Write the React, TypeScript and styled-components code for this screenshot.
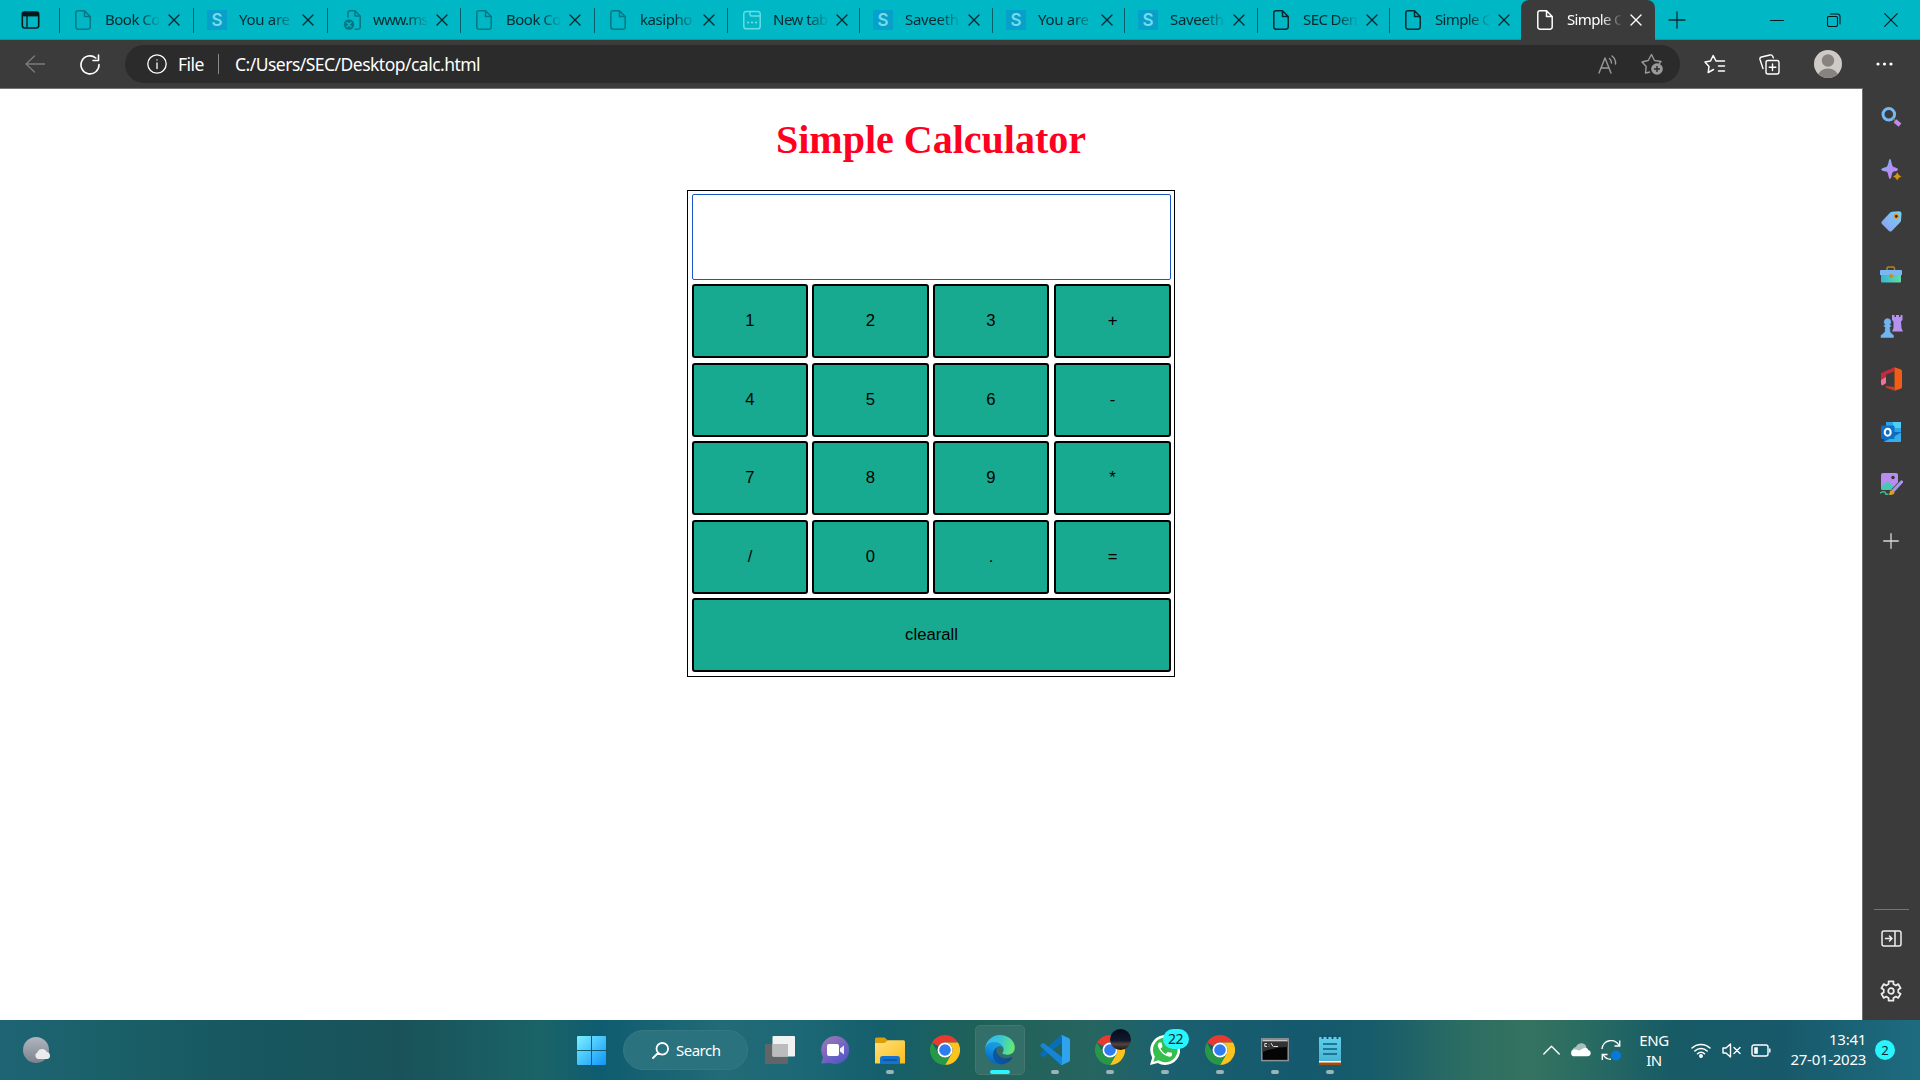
import React from "react";
import styled, { createGlobalStyle } from "styled-components";

const UI = `"Noto Sans", "Open Sans", sans-serif`;

const GlobalStyle = createGlobalStyle`
  *, *::before, *::after { box-sizing: border-box; }
  body { margin: 0; background: #fff; overflow: hidden; }
  svg { display: block; flex: none; }
`;

const Desktop = styled.div`
  width: 1920px;
  height: 1080px;
  display: flex;
  flex-direction: column;
  font-family: ${UI};
  overflow: hidden;
`;

/* ---------- tab strip ---------- */
const TabStrip = styled.div`
  height: 40px;
  flex: none;
  display: flex;
  background: #00b7c6;
  box-shadow: inset 0 -2px 1px -1px #079aa8;
`;
const TabActions = styled.div`
  width: 59px;
  padding-left: 1px;
  display: flex;
  align-items: center;
  justify-content: center;
`;
const Tab = styled.div<{ $w: number; $active?: boolean }>`
  position: relative;
  width: ${(p) => p.$w}px;
  height: 40px;
  flex: none;
  display: flex;
  align-items: center;
  padding-left: ${(p) => (p.$active ? 16 : 15)}px;
  border-left: ${(p) => (p.$active ? 0 : 1)}px solid transparent;
  color: ${(p) => (p.$active ? "#fff" : "#052a2e")};
  background: ${(p) => (p.$active ? "#3b3b3b" : "transparent")};
  border-radius: ${(p) => (p.$active ? "8px 8px 0 0" : "0")};
  &::before {
    content: "";
    display: ${(p) => (p.$active ? "none" : "block")};
    position: absolute;
    left: -1px;
    top: 8px;
    width: 1px;
    height: 25px;
    background: #06606a;
  }
`;
const TabIcon = styled.span`
  width: 20px;
  height: 20px;
  display: flex;
  align-items: center;
`;
const TabTitle = styled.span<{ $track: number }>`
  width: 54px;
  margin-left: 10px;
  padding-bottom: 2px;
  overflow: hidden;
  white-space: nowrap;
  font-size: 15px;
  line-height: 22px;
  letter-spacing: ${(p) => p.$track}px;
  -webkit-mask-image: linear-gradient(90deg, #000 62%, transparent 104%);
  mask-image: linear-gradient(90deg, #000 62%, transparent 104%);
`;
const TabClose = styled.span`
  margin-left: 9px;
`;
const SiteBadge = styled.span`
  width: 20px;
  height: 20px;
  margin-left: -2px;
  background: #06a0cb;
  color: #74dbe8;
  font: 600 17px/20px Inter, sans-serif;
  text-align: center;
`;
const NewTab = styled.div`
  width: 44px;
  display: flex;
  align-items: center;
  justify-content: center;
`;
const WindowButtons = styled.div`
  margin-left: auto;
  margin-right: 1px;
  display: flex;
`;
const WindowButton = styled.div`
  width: 57px;
  height: 39px;
  display: flex;
  align-items: center;
  justify-content: center;
`;

/* ---------- toolbar ---------- */
const Toolbar = styled.div`
  height: 48px;
  flex: none;
  display: flex;
  align-items: center;
  background: #3b3b3b;
  color: #fff;
`;
const NavSlot = styled.div<{ $w: number }>`
  width: ${(p) => p.$w}px;
  display: flex;
  justify-content: center;
`;
const AddressBar = styled.div`
  width: 1555px;
  height: 38px;
  display: flex;
  align-items: center;
  padding: 0 17px 0 22px;
  border-radius: 19px;
  background: #2b2b2b;
  font-size: 17.5px;
  line-height: 24px;
  white-space: pre;
`;
const Scheme = styled.span`
  margin-left: 11px;
  padding-bottom: 1px;
  width: 40px;
  letter-spacing: -0.5px;
`;
const AddressRule = styled.span`
  width: 1px;
  height: 20px;
  background: #8a8a8a;
`;
const Url = styled.span`
  margin-left: 16px;
  padding-bottom: 1px;
  letter-spacing: -0.52px;
`;
const AddressTools = styled.div`
  margin-left: auto;
  display: flex;
  align-items: center;
  gap: 24px;
`;
const ToolbarEnd = styled.div`
  flex: 1;
  display: flex;
  align-items: center;
  padding-left: 7px;
`;

/* ---------- page and sidebar ---------- */
const Middle = styled.div`
  flex: 1;
  display: flex;
  min-height: 0;
`;
const Page = styled.main`
  width: 1862px;
  border-top: 1px solid #757575;
  background: #fff;
  display: flex;
  flex-direction: column;
  align-items: center;
`;
const Heading = styled.h1`
  margin: 27px 0 27px;
  font: 700 40px/47px "Liberation Serif", "Times New Roman", serif;
  color: #ff0021;
`;
const Calculator = styled.section`
  width: 488px;
  height: 487px;
  border: 1px solid #000;
  padding: 3px 3px 3px 4px;
  display: grid;
  grid-template-columns: 120px 121px 121px 117px;
  grid-template-rows: 90px 79px 78px 79px 78px 74px;
  justify-items: start;
  align-items: start;
`;
const Display = styled.input`
  grid-column: 1 / -1;
  width: 479px;
  height: 86px;
  margin: 0;
  border: 1px solid #1a56c4;
  border-radius: 2px;
  outline: none;
  background: #fff;
`;
const Key = styled.button<{ $w: number; $span?: boolean }>`
  grid-column: ${(p) => (p.$span ? "1 / -1" : "auto")};
  width: ${(p) => p.$w}px;
  height: 74px;
  margin: 0;
  padding: 0;
  border: 2px solid #000;
  border-radius: 3px;
  background: #18aa90;
  color: #000;
  font: 16.667px "Liberation Sans", Arial, sans-serif;
`;
const Sidebar = styled.aside`
  width: 58px;
  display: flex;
  flex-direction: column;
  align-items: center;
  padding: 3px 1px 3px 0;
  background: #3b3b3b;
  border-left: 1px solid #6e6e6e;
`;
const SideSlot = styled.div<{ $h: number }>`
  height: ${(p) => p.$h}px;
  display: flex;
  align-items: center;
`;
const SideRule = styled.div`
  width: 35px;
  height: 1px;
  margin: auto 0 3px;
  background: #757575;
`;

/* ---------- taskbar ---------- */
const Taskbar = styled.footer`
  height: 60px;
  flex: none;
  display: flex;
  align-items: center;
  color: #fff;
  background: linear-gradient(
    90deg,
    #1f6474 0, #1a6068 110px, #175760 240px, #195359 400px, #1a6367 540px,
    #0f5c70 600px, #226b77 720px, #1d6876 800px, #155f6c 880px, #1f6159 975px,
    #26655f 1090px, #1a6070 1170px, #14596d 1300px, #165c6b 1370px, #2d6e62 1470px,
    #357360 1530px, #286b62 1590px, #175b66 1670px, #17596a 1780px, #1e6b80 1920px
  );
`;
const Weather = styled.div`
  width: 564px;
  padding-left: 23px;
`;
const AppSlot = styled.div`
  position: relative;
  width: 55px;
  height: 60px;
  display: flex;
  align-items: center;
  justify-content: center;
`;
const ActivePlate = styled.div`
  width: 50px;
  height: 50px;
  display: flex;
  align-items: center;
  justify-content: center;
  border-radius: 5px;
  border: 1px solid #45766f;
  background: #336e68;
`;
const Indicator = styled.span<{ $active?: boolean }>`
  position: absolute;
  bottom: 6px;
  left: ${(p) => (p.$active ? 17.5 : 23.5)}px;
  width: ${(p) => (p.$active ? 20 : 8)}px;
  height: 4px;
  border-radius: 2px;
  background: ${(p) => (p.$active ? "#29f5fd" : "#9bb4b8")};
`;
const SearchPill = styled.div`
  width: 125px;
  height: 40px;
  margin: 0 4.5px 0 4px;
  padding-left: 28px;
  display: flex;
  align-items: center;
  gap: 7px;
  border-radius: 20px;
  border: 1px solid #347884;
  background: #2b727f;
  font-size: 15px;
  letter-spacing: -0.5px;
`;
const CountBadge = styled.span`
  position: absolute;
  left: 25px;
  top: 9px;
  width: 26px;
  height: 20px;
  border-radius: 10px;
  background: #29f5fd;
  color: #062c30;
  font-size: 14px;
  line-height: 20px;
  letter-spacing: -0.4px;
  text-align: center;
`;
const ProfileBadge = styled.span`
  position: absolute;
  left: 27px;
  top: 9px;
  width: 21px;
  height: 21px;
  border-radius: 50%;
  background: linear-gradient(180deg, #070b18 0%, #101a30 55%, #54443c 72%, #161418 100%);
`;
const Tray = styled.div`
  margin-left: auto;
  padding-right: 25px;
  display: flex;
  align-items: center;
`;
const TraySlot = styled.div`
  width: 30px;
  display: flex;
  justify-content: center;
`;
const Language = styled.div`
  width: 56px;
  margin-right: 4px;
  padding-bottom: 1px;
  text-align: center;
  font-size: 15px;
  line-height: 20px;
  letter-spacing: -0.4px;
`;
const Clock = styled.div`
  width: 90px;
  padding-bottom: 2px;
  text-align: right;
  font-size: 15px;
  line-height: 20px;
  letter-spacing: -0.28px;
`;
const Notices = styled.div`
  width: 20px;
  height: 20px;
  margin-left: 9px;
  border-radius: 50%;
  background: #29f5fd;
  color: #062c30;
  font-size: 13px;
  line-height: 20px;
  text-align: center;
`;

/* ---------- drawings ---------- */
type StrokeProps = {
  w: number;
  h: number;
  d: string;
  color?: string;
  sw?: number;
  children?: React.ReactNode;
};
const Line = ({ w, h, d, color = "currentColor", sw = 1.5, children }: StrokeProps) => (
  <svg width={w} height={h} viewBox={`0 0 ${w} ${h}`} fill="none" stroke={color} strokeWidth={sw} strokeLinecap="round" strokeLinejoin="round">
    <path d={d} />
    {children}
  </svg>
);

const FileIcon = ({ color }: { color: string }) => (
  <Line w={16} h={20} color={color} d="M3 .8H9.5L15.2 6.5V17A2.2 2.2 0 0 1 13 19.2H3A2.2 2.2 0 0 1 .8 17V3A2.2 2.2 0 0 1 3 .8ZM9.5 1V6.5H15" />
);
const BlockedFileIcon = () => (
  <Line w={18} h={20} color="#057783" d="M5 7V3A2.2 2.2 0 0 1 7 .8H12L17.2 6V17A2.2 2.2 0 0 1 15 19.2H12M12 1V6H17">
    <circle cx="6" cy="14.5" r="5.2" fill="#057783" stroke="none" />
    <path d="M4 12.5l4 4M8 12.5l-4 4" stroke="#00b7c6" strokeWidth="1.4" />
  </Line>
);
const NewTabPageIcon = () => (
  <Line w={18} h={20} color="#68dce2" d="M3 1.5H15A2.2 2.2 0 0 1 17.2 3.8V16.5A2.2 2.2 0 0 1 15 18.8H3A2.2 2.2 0 0 1 .8 16.5V3.8A2.2 2.2 0 0 1 3 1.5ZM7 1.5V4.5Q7 6 8.5 6H17">
    <path d="M5 12.5h.1M9 12.5h.1M13 12.5h.1" strokeWidth="2.2" />
  </Line>
);

const gearPath = (() => {
  const points: string[] = [];
  for (let i = 0; i < 6; i++) {
    const mid = i * 60 - 90;
    [[-19, 7.4], [-14, 10], [14, 10], [19, 7.4]].forEach(([offset, r]) => {
      const a = ((mid + offset) * Math.PI) / 180;
      points.push(`${(11 + r * Math.cos(a)).toFixed(2)} ${(11 + r * Math.sin(a)).toFixed(2)}`);
    });
  }
  return `M${points.join("L")}Z`;
})();

const Chrome = () => (
  <svg width="30" height="30" viewBox="0 0 48 48">
    <path fill="#e63b2e" d="M24 0A24 24 0 0 1 44.8 12H24A12 12 0 0 0 13.6 18L3.2 12A24 24 0 0 1 24 0Z" />
    <path fill="#fcc31e" d="M44.8 12A24 24 0 0 1 24 48L34.4 30A12 12 0 0 0 24 12Z" />
    <path fill="#279847" d="M3.2 12L13.6 30A12 12 0 0 0 34.4 30L24 48A24 24 0 0 1 3.2 12Z" />
    <circle cx="24" cy="24" r="12" fill="#fff" />
    <circle cx="24" cy="24" r="9.3" fill="#2f7cf0" />
  </svg>
);
const Edge = () => (
  <svg width="30" height="30" viewBox="0 0 257 259">
    <defs>
      <linearGradient id="edgeA" x1="60" y1="180" x2="240" y2="180" gradientUnits="userSpaceOnUse">
        <stop stopColor="#0c59a4" /><stop offset="1" stopColor="#114a8b" />
      </linearGradient>
      <linearGradient id="edgeB" x1="130" y1="60" x2="50" y2="230" gradientUnits="userSpaceOnUse">
        <stop stopColor="#1b9de2" /><stop offset=".4" stopColor="#1595df" /><stop offset="1" stopColor="#0669bd" />
      </linearGradient>
      <linearGradient id="edgeC" x1="10" y1="50" x2="250" y2="120" gradientUnits="userSpaceOnUse">
        <stop stopColor="#35b9ee" /><stop offset=".45" stopColor="#36c6d8" /><stop offset="1" stopColor="#66eb6e" />
      </linearGradient>
    </defs>
    <path fill="url(#edgeA)" d="M231 190.5a94 94 0 0 1-10.5 4.7 102 102 0 0 1-36 6.5c-47.3 0-88.5-32.6-88.5-74.3a31.5 31.5 0 0 1 16.4-27.3c-42.8 1.8-53.8 46.4-53.8 72.5 0 74 68.1 81.4 82.8 81.4 7.9 0 19.8-2.3 27-4.6l1.3-.4a128.3 128.3 0 0 0 66.6-52.8 4 4 0 0 0-5.3-5.7z" />
    <path fill="url(#edgeB)" d="M105.7 242a79.2 79.2 0 0 1-22.7-21.4A80.7 80.7 0 0 1 112.5 99.7c3.1-1.5 8.5-4.1 15.6-4a32.4 32.4 0 0 1 25.7 13 31.9 31.9 0 0 1 6.3 18.7c0-.2 24.5-79.6-80-79.6-43.9 0-80 41.7-80 78.2a130.2 130.2 0 0 0 12.1 56 128 128 0 0 0 156.4 67.1 75.5 75.5 0 0 1-62.8-7z" />
    <path fill="url(#edgeC)" d="M152.3 148.9c-.8 1-3.3 2.5-3.3 5.7 0 2.7 1.7 5.2 4.8 7.3 14.4 10 41.5 8.7 41.6 8.7a59.6 59.6 0 0 0 30.3-8.3 61.4 61.4 0 0 0 30.4-52.9c.3-22.3-8-37.1-11.3-43.7C223.5 24.3 177.7.4 128 .4A128 128 0 0 0 0 126.8c.5-36.5 36.8-66 80-66 3.5 0 23.5.3 42 10 16.3 8.6 24.9 19 30.9 29.3 6.2 10.7 7.3 24.2 7.3 29.5s-2.8 13.3-7.9 19.3z" />
  </svg>
);
const VsCode = () => (
  <svg width="30" height="30" viewBox="0 0 30 30">
    <path fill="#0a6db8" d="M22 0V8L4 21.8Q3 22.4 2 21.6L.5 20.2Q-.3 19.3.6 18.5L20.5.6Q21.2 0 22 0Z" />
    <path fill="#1586d4" d="M22 30V22L4 8.2Q3 7.6 2 8.4L.5 9.8Q-.3 10.7.6 11.5L20.5 29.4Q21.2 30 22 30Z" />
    <path fill="#2fa3ee" d="M22 0L29 3.3Q30 3.8 30 5V25Q30 26.2 29 26.7L22 30Q21 30 20.7 29.3Q22 29.7 22 28V2Q22 .3 20.7.7Q21 0 22 0Z" />
  </svg>
);
const WhatsApp = () => (
  <svg width="30" height="30" viewBox="0 0 30 30">
    <path fill="#fff" d="M0 30L2.2 22.4A15 15 0 1 1 7.8 28Z" />
    <path fill="#35bd4d" d="M3.4 26.7L4.9 21.6A12.3 12.3 0 1 1 8.6 25.3Z" />
    <path fill="#fff" transform="translate(5.2 5.2) scale(.8)" d="M6.62,10.79C8.06,13.62 10.38,15.94 13.21,17.38L15.41,15.18C15.69,14.9 16.08,14.82 16.43,14.93C17.55,15.3 18.75,15.5 20,15.5A1,1 0 0,1 21,16.5V18.5C20.5,20.5 18.5,21 16.5,20.5C10,18.5 5.5,14 3.5,8C3,6 3.5,3.5 5.5,3H7.5A1,1 0 0,1 8.2,4L9.07,7.57C9.18,7.92 9.1,8.31 8.82,8.59Z" />
  </svg>
);
const Explorer = () => (
  <svg width="30" height="27" viewBox="0 0 30 27">
    <defs>
      <linearGradient id="fold" x1="0" y1="0" x2="1" y2="1">
        <stop stopColor="#ffe17a" /><stop offset="1" stopColor="#fbbd1d" />
      </linearGradient>
    </defs>
    <path fill="#dd9d08" d="M0 2Q0 .5 1.5.5H9.5L13 3.5V8H0Z" />
    <path fill="url(#fold)" d="M0 6H9.5L13 3.2H28.5Q30 3.2 30 4.7V26Q30 26.5 29.5 26.5H.5Q0 26.5 0 26Z" />
    <path fill="#1473ce" d="M5 27V21.5Q5 19 7.5 19H22.5Q25 19 25 21.5V27Z" />
    <path stroke="#0c4c94" strokeWidth="1.4" d="M8 23H22" />
  </svg>
);
const TaskView = () => (
  <svg width="30" height="28" viewBox="0 0 30 28">
    <rect x="0" y="8" width="23" height="20" rx="1" fill="#626567" />
    <rect x="7.5" y="0" width="22.5" height="20.5" rx="1" fill="#f1f2f2" />
    <rect x="7.5" y="8" width="15.5" height="12.5" fill="#babcbd" />
  </svg>
);
const Chat = () => (
  <svg width="28" height="28" viewBox="0 0 28 28">
    <defs>
      <linearGradient id="chat" x1="0" y1="0" x2=".7" y2="1">
        <stop stopColor="#a27bb4" /><stop offset="1" stopColor="#5157c8" />
      </linearGradient>
    </defs>
    <path fill="url(#chat)" d="M14 0A14 14 0 1 1 9 27Q5 27 .6 27.5Q0 27.4.4 26.6L2 21A14 14 0 0 1 14 0Z" />
    <rect x="6" y="8" width="12" height="12" rx="2" fill="#fff" />
    <path fill="#f1eefc" d="M19 12.5L23 9.5V18.5L19 15.5Z" />
  </svg>
);
const Terminal = () => (
  <svg width="28" height="24" viewBox="0 0 28 24">
    <rect x=".8" y=".8" width="26.4" height="21.8" fill="#050505" stroke="#8d9294" strokeWidth="1.5" />
    <rect x="1.5" y="1.5" width="25" height="2" fill="#c6c9ca" />
    <path d="M1.5 4H26.5V9Q14 9 1.5 14Z" fill="#333" />
    <path d="M6 5.5H3.8V8.5H6M8 6V6.5M8 8V8.5M10 5L12 8.5M12.5 8.5H17" fill="none" stroke="#ddd" strokeWidth="1" />
  </svg>
);
const Notepad = () => (
  <svg width="22" height="30" viewBox="0 0 22 30">
    <defs>
      <linearGradient id="note" x1="0" y1="0" x2="0" y2="1">
        <stop stopColor="#5ed0ea" /><stop offset="1" stopColor="#48b4d4" />
      </linearGradient>
    </defs>
    <path fill="#a34d0c" d="M0 26H22V29Q22 30 21 30H1Q0 30 0 29Z" />
    <path fill="#fff" d="M0 24H22V27.5H0Z" />
    <path fill="url(#note)" d="M1 2H21Q22 2 22 3V26H0V3Q0 2 1 2Z" />
    <path d="M4 9H18M4 14H18M4 19H18" stroke="#0d5f80" strokeWidth="1.5" />
    <path d="M3.5 0V4M8.500 0V4M13.5 0V4M18.5 0V4" stroke="#0d4f69" strokeWidth="1.8" />
  </svg>
);

const SideDefs = () => (
  <svg width="0" height="0">
    <defs>
      <linearGradient id="bp" x1="0" y1="0" x2="1" y2="1">
        <stop stopColor="#63c5f5" /><stop offset=".55" stopColor="#b48df5" /><stop offset="1" stopColor="#c08af2" />
      </linearGradient>
      <linearGradient id="pb" x1="0" y1="1" x2="1" y2="0">
        <stop stopColor="#8f9cf5" /><stop offset="1" stopColor="#74d3f4" />
      </linearGradient>
      <linearGradient id="box" x1="0" y1="0" x2="1" y2="0">
        <stop stopColor="#35b6d6" /><stop offset="1" stopColor="#62dba0" />
      </linearGradient>
    </defs>
  </svg>
);
const sideIcons: React.ReactNode[] = [
  <svg width="21" height="20" viewBox="0 0 21 20">
    <circle cx="7.8" cy="7.3" r="5.8" fill="none" stroke="#74b9f4" strokeWidth="3" />
    <path d="M11.8 11.5L14 13.5" stroke="#a57a38" strokeWidth="1.5" />
    <path d="M14 13.8L19 18.200" stroke="#bd8cf0" strokeWidth="4.2" />
  </svg>,
  <svg width="22" height="22" viewBox="0 0 22 22">
    <path fill="url(#bp)" d="M10 0C11.5 0 11.5 7 13.5 8C19.5 9.500 19.5 11.5 13.5 12.500C11.5 13.5 11.5 20 10 20C8.5 20 8.5 13.5 6.5 12.5C-.5 11.5-.5 9.5 6.5 8C8.5 7 8.5 0 10 0Z" />
    <path fill="#cf9412" stroke="#3b3b3b" strokeWidth=".6" d="M17.3 12.5Q18.4 16.300 22 17.5Q18.4 18.5 17.3 22Q16.1 18.5 12.5 17.5Q16.1 16.3 17.3 12.5Z" />
  </svg>,
  <svg width="21" height="21" viewBox="0 0 21 21">
    <path fill="url(#pb)" d="M11 .8L18 .3Q20.5.3 20.5 3L20 9.5Q20 10.5 19 11.5L10.8 20Q9.3 21 8 20L1 13Q-.2 11.6 1 10.2L9 1.8Q10 .9 11 .8Z" />
    <circle cx="15.3" cy="5.3" r="2" fill="#222" stroke="#e8941c" strokeWidth="1.3" />
  </svg>,
  <svg width="22" height="17" viewBox="0 0 22 17">
    <path d="M7 4V2.5Q7 1 8.5 1H13Q14.5 1 14.5 2.5V4" fill="none" stroke="#b8802a" strokeWidth="1.5" />
    <path fill="url(#box)" d="M1 8H21V15.5Q21 16.5 20 16.5H2Q1 16.5 1 15.5Z" />
    <path fill="#7bb7f3" d="M0 5Q0 4 1 4H21Q22 4 22 5V9H0Z" />
    <circle cx="11" cy="10" r="2.1" fill="#c98e16" />
  </svg>,
  <svg width="23" height="23" viewBox="0 0 23 23">
    <path fill="#b592ee" d="M12 0H14.5V2H16V0H19V2H20.5V0H22.5V5L21 6.5L21.5 13L23 16.5H12L13.5 13L13.5 6.5L12 5Z" />
    <path fill="#70b5f2" stroke="#3b3b3b" strokeWidth=".5" d="M7.5 3A4 4 0 0 1 10 10H11.5V12H10L10.5 17L14 20.5V23H.5V20.5L4.5 17L5 12H3.5V10H5A4 4 0 0 1 7.5 3Z" />
  </svg>,
  <svg width="21" height="24" viewBox="0 0 21 24">
    <path fill="#c62a3c" d="M0 6L13.5.3V4.5L5 7.5V16L1.5 18.5Q0 18 0 16Z" />
    <path fill="#f25c14" d="M13.5.3L20 2.5Q21 3 21 4V20Q21 21 20 21.5L13.5 23.7Z" />
    <path fill="#d13a28" d="M4.5 19L13.5 20V23.7L5 20.5Z" />
    <path fill="#ef729a" d="M0 13L5 10V16L1.5 18.5Q0 18 0 16Z" />
  </svg>,
  <svg width="21" height="20" viewBox="0 0 21 20">
    <rect x="5" y="0" width="15" height="12" fill="#2da4e6" />
    <path fill="#50cdf5" d="M12 0H20V6H12Z" />
    <path fill="#0e6ab8" d="M3 10L20 10V20H3Z" />
    <path fill="#35aee9" d="M3 20L20 10.5V19Q20 20 19 20Z" />
    <rect x="0" y="3.5" width="13.5" height="13.5" rx="1.2" fill="#0d6fc7" />
    <ellipse cx="6.7" cy="10.2" rx="3" ry="3.5" fill="none" stroke="#fff" strokeWidth="2" />
  </svg>,
  <svg width="23" height="24" viewBox="0 -1 23 24">
    <rect x="1" y="0" width="17" height="17" rx="2" fill="#b98df0" />
    <path fill="#46c9b0" d="M1 14L7.5 8.5L16 15.5Q16 17 14 17H3Q1 17 1 15Z" />
    <circle cx="13" cy="4.5" r="1.7" fill="#333" />
    <path d="M21.5 9L13 18" stroke="#3b3b3b" strokeWidth="4.6" />
    <path d="M21.5 9L13 18" stroke="#a995ee" strokeWidth="3.2" strokeLinecap="round" />
    <path fill="#db9c28" d="M10 18Q13 16 14.5 19Q14.5 22.5 9 22Z" />
    <path d="M0 20Q5 17.5 5.5 20Q5 22 8.5 21" fill="none" stroke="#42b98f" strokeWidth="1.5" />
  </svg>,
];

/* ---------- data ---------- */
type TabInfo = { title: string; icon: "file" | "dark" | "site" | "blocked" | "newtab"; w: number; track: number };
const tabs: TabInfo[] = [
  { title: "Book Co", icon: "file", w: 134, track: -0.5 },
  { title: "You are", icon: "site", w: 134, track: -0.3 },
  { title: "www.ms", icon: "blocked", w: 133, track: -0.9 },
  { title: "Book Co", icon: "file", w: 134, track: -0.5 },
  { title: "kasipho", icon: "file", w: 133, track: -0.45 },
  { title: "New tab", icon: "newtab", w: 132, track: -0.5 },
  { title: "Saveeth", icon: "site", w: 133, track: -0.3 },
  { title: "You are", icon: "site", w: 132, track: -0.3 },
  { title: "Saveeth", icon: "site", w: 133, track: -0.3 },
  { title: "SEC Dem", icon: "dark", w: 132, track: -0.6 },
  { title: "Simple C", icon: "dark", w: 132, track: -0.65 },
];
const renderTabIcon = (icon: TabInfo["icon"]) => {
  if (icon === "site") return <SiteBadge>S</SiteBadge>;
  if (icon === "blocked") return <BlockedFileIcon />;
  if (icon === "newtab") return <NewTabPageIcon />;
  return <FileIcon color={icon === "dark" ? "#052a2e" : "#057783"} />;
};
const keys = ["1", "2", "3", "+", "4", "5", "6", "-", "7", "8", "9", "*", "/", "0", ".", "="];
const keyWidths = [116, 117, 116, 117];

export default function App() {
  return (
    <Desktop>
      <GlobalStyle />
      <TabStrip>
        <TabActions>
          <svg width="19" height="18" viewBox="0 0 19 18" fill="none" stroke="#04191c" strokeWidth="1.6">
            <rect x="1.3" y="1" width="16.4" height="16" rx="2.5" />
            <path d="M1.3 3.3H17.7" strokeWidth="4.2" />
            <path d="M6 5V17" strokeWidth="1.3" />
          </svg>
        </TabActions>
        {tabs.map((t, i) => (
          <Tab key={i} $w={t.w}>
            <TabIcon>{renderTabIcon(t.icon)}</TabIcon>
            <TabTitle $track={t.track}>{t.title}</TabTitle>
            <TabClose><Line w={12} h={12} sw={1.4} d="M1 1L11 11M11 1L1 11" /></TabClose>
          </Tab>
        ))}
        <Tab $active $w={134}>
          <TabIcon><FileIcon color="#fff" /></TabIcon>
          <TabTitle $track={-0.65}>Simple C</TabTitle>
          <TabClose><Line w={12} h={12} sw={1.4} d="M1 1L11 11M11 1L1 11" /></TabClose>
        </Tab>
        <NewTab><Line w={18} h={18} sw={1.3} color="#052a2e" d="M9 1V17M1 9H17" /></NewTab>
        <WindowButtons>
          <WindowButton><Line w={14} h={14} sw={1} color="#04191c" d="M.5 7.5H13.5" /></WindowButton>
          <WindowButton>
            <Line w={14} h={14} sw={1.1} color="#04191c" d="M2 3.5H9A1.5 1.5 0 0 1 10.5 5V12A1.5 1.5 0 0 1 9 13.5H2A1.5 1.5 0 0 1 .5 12V5A1.5 1.5 0 0 1 2 3.5ZM3.5 1H10.5A2.5 2.5 0 0 1 13 3.5V11" />
          </WindowButton>
          <WindowButton><Line w={14} h={14} sw={1.1} color="#04191c" d="M.7.7L13.3 13.3M13.3.7L.7 13.3" /></WindowButton>
        </WindowButtons>
      </TabStrip>

      <Toolbar>
        <NavSlot $w={70}><Line w={20} h={18} color="#7c7c7c" sw={1.3} d="M19.5 9H1M9.5 1L1 9L9.5 17" /></NavSlot>
        <NavSlot $w={40}>
          <Line w={20} h={21} sw={1.6} d="M19 10.5A9 9 0 1 1 15.8 4M18.5 1V6.5H13" />
        </NavSlot>
        <NavSlot $w={15} />
        <AddressBar>
          <Line w={20} h={20} sw={1.3} d="M10 .8A9.2 9.2 0 1 1 10 19.2A9.2 9.2 0 1 1 10 .8ZM10 9V14.5M10 5.8V6" />
          <Scheme>File</Scheme>
          <AddressRule />
          <Url>C:/Users/SEC/Desktop/calc.html</Url>
          <AddressTools>
            <Line w={19} h={19} color="#9a9a9a" sw={1.4} d="M1 18L7 3L13 18M3 13H11M11.5 3.5Q13.5 5 13.5 8M14 1Q18 4 17.5 9" />
            <svg width="22" height="22" viewBox="0 0 22 22" fill="none" stroke="#9a9a9a" strokeWidth="1.4" strokeLinejoin="round">
              <path d="M9 19L4.5 20L5.2 13.5L1 9L7.2 7.5L10.5 1.5L13.5 7.5L20 8.5L18 11" />
              <circle cx="16" cy="16" r="5.8" fill="#9a9a9a" stroke="none" />
              <path d="M16 13V19M13 16H19" stroke="#2b2b2b" />
            </svg>
          </AddressTools>
        </AddressBar>
        <ToolbarEnd>
          <NavSlot $w={56}>
            <Line w={22} h={20} sw={1.5} d="M12 7H20.5M14.5 12H20.5M14.5 17H20.5M12 7L9.2 1.5L6.5 7L1 8L5 12.5L4.2 18.5L9.5 15.5" />
          </NavSlot>
          <NavSlot $w={53}>
            <Line w={21} h={21} sw={1.4} d="M9 6.5H18A2 2 0 0 1 20 8.5V18A2 2 0 0 1 18 20H9A2 2 0 0 1 7 18V8.5A2 2 0 0 1 9 6.5ZM13.5 10V16.5M10.2 13.3H16.8M4 14.5L1 5.5Q.5 3.5 2.5 3L11 1Q13 .5 13.8 2.5L14.3 3.8" />
          </NavSlot>
          <NavSlot $w={63}>
            <svg width="28" height="28" viewBox="0 0 28 28">
              <defs><clipPath id="face"><circle cx="14" cy="14" r="14" /></clipPath></defs>
              <circle cx="14" cy="14" r="14" fill="#cecac6" />
              <g clipPath="url(#face)" fill="#88837f">
                <circle cx="14" cy="10.5" r="6.2" />
                <ellipse cx="14" cy="26" rx="10" ry="7.5" />
              </g>
            </svg>
          </NavSlot>
          <NavSlot $w={51}>
            <svg width="17" height="4" viewBox="0 0 17 4" fill="#fff">
              <circle cx="2" cy="2" r="1.6" /><circle cx="8.5" cy="2" r="1.6" /><circle cx="15" cy="2" r="1.6" />
            </svg>
          </NavSlot>
        </ToolbarEnd>
      </Toolbar>

      <Middle>
        <Page>
          <Heading>Simple Calculator</Heading>
          <Calculator>
            <Display readOnly aria-label="display" />
            {keys.map((k, i) => (
              <Key key={k} $w={keyWidths[i % 4]}>{k}</Key>
            ))}
            <Key $w={479} $span>clearall</Key>
          </Calculator>
        </Page>
        <Sidebar>
          <SideDefs />
          {sideIcons.map((icon, i) => <SideSlot key={i} $h={52.4}>{icon}</SideSlot>)}
          <SideSlot $h={61.6}><Line w={16} h={16} sw={1.3} color="#d8d8d8" d="M8 .7V15.3M.7 8H15.3" /></SideSlot>
          <SideRule />
          <SideSlot $h={51}>
            <Line w={21} h={17} color="#eee" sw={1.5} d="M3 1H18A2 2 0 0 1 20 3V14A2 2 0 0 1 18 16H3A2 2 0 0 1 1 14V3A2 2 0 0 1 3 1ZM14 1V16M4.5 8.5H11M8.5 6L11 8.5L8.5 11" />
          </SideSlot>
          <SideSlot $h={53}>
            <Line w={22} h={22} color="#eee" sw={1.7} d={gearPath}><circle cx="11" cy="11" r="2.8" /></Line>
          </SideSlot>
        </Sidebar>
      </Middle>

      <Taskbar>
        <Weather>
          <svg width="28" height="26" viewBox="0 0 28 26">
            <defs>
              <linearGradient id="moon" x1="0" y1="0" x2="0" y2="1">
                <stop stopColor="#b0b6bf" /><stop offset="1" stopColor="#7d828c" />
              </linearGradient>
            </defs>
            <circle cx="13" cy="13" r="13" fill="url(#moon)" />
            <path fill="#e9ebee" d="M15 22A3.6 3.6 0 0 1 14.5 15.2A5 5 0 0 1 23.8 15A3.6 3.6 0 0 1 24.5 22Z" />
          </svg>
        </Weather>
        <AppSlot>
          <svg width="29" height="29" viewBox="0 0 29 29">
            <defs>
              <linearGradient id="win" x1="0" y1="0" x2="29" y2="29" gradientUnits="userSpaceOnUse">
                <stop stopColor="#7cf0fd" /><stop offset="1" stopColor="#0f95fb" />
              </linearGradient>
            </defs>
            <path fill="url(#win)" d="M1 0H14V14H0V1Q0 0 1 0ZM15 0H28Q29 0 29 1V14H15ZM0 15H14V29H1Q0 29 0 28ZM15 15H29V28Q29 29 28 29H15Z" />
          </svg>
        </AppSlot>
        <SearchPill>
          <Line w={17} h={17} sw={1.8} d="M10.3 1A5.8 5.8 0 1 1 10.3 12.6A5.8 5.8 0 1 1 10.3 1ZM6 11L1 16" />
          <span>Search</span>
        </SearchPill>
        <AppSlot><TaskView /></AppSlot>
        <AppSlot><Chat /></AppSlot>
        <AppSlot><Explorer /><Indicator /></AppSlot>
        <AppSlot><Chrome /></AppSlot>
        <AppSlot><ActivePlate><Edge /></ActivePlate><Indicator $active /></AppSlot>
        <AppSlot><VsCode /><Indicator /></AppSlot>
        <AppSlot><Chrome /><ProfileBadge /><Indicator /></AppSlot>
        <AppSlot><WhatsApp /><CountBadge>22</CountBadge><Indicator /></AppSlot>
        <AppSlot><Chrome /><Indicator /></AppSlot>
        <AppSlot><Terminal /><Indicator /></AppSlot>
        <AppSlot><Notepad /><Indicator /></AppSlot>
        <Tray>
          <TraySlot><Line w={17} h={10} sw={1.4} d="M.8 9L8.5 1.2L16.2 9" /></TraySlot>
          <TraySlot>
            <svg width="20" height="14" viewBox="0 0 20 14">
              <path fill="#a9bfb9" d="M1.5 8.5Q1 4.5 5 4Q6.5 0 11 .3Q15 1 15.5 4.5L8 10Z" />
              <path fill="#fff" d="M3.5 13.3A3.4 3.4 0 0 1 3.5 6.5Q5.5 6 8 7.5L13.5 4.7Q16.5 4.3 17.3 7A3.2 3.2 0 0 1 16.5 13.3Z" />
            </svg>
          </TraySlot>
          <TraySlot>
            <svg width="20" height="21" viewBox="0 0 20 21" fill="none" stroke="#fff" strokeWidth="1.4">
              <path d="M1 9A9 9 0 0 1 18 5.5M18.7.5V6H13.5M10 19.3A9 9 0 0 1 2 14.5M1.3 20V14.5H6.5" />
              <circle cx="15" cy="15.5" r="5" fill="#0a78d6" stroke="none" />
            </svg>
          </TraySlot>
          <Language>ENG<br />IN</Language>
          <TraySlot>
            <Line w={20} h={15} sw={1.5} d="M1 5A13 13 0 0 1 19 5M3.8 8A9 9 0 0 1 16.2 8M6.5 10.8A5 5 0 0 1 13.5 10.8">
              <circle cx="10" cy="13" r="1.2" fill="#fff" />
            </Line>
          </TraySlot>
          <TraySlot>
            <Line w={19} h={15} sw={1.4} d="M1 5H4L8.5 1V14L4 10H1ZM12 4.5L18 10.5M18 4.5L12 10.5" />
          </TraySlot>
          <TraySlot>
            <Line w={20} h={13} sw={1.4} d="M3 1H15A2 2 0 0 1 17 3V10A2 2 0 0 1 15 12H3A2 2 0 0 1 1 10V3A2 2 0 0 1 3 1ZM18.800 5V8">
              <rect x="3.2" y="3.2" width="3.6" height="6.6" rx=".5" fill="#fff" stroke="none" />
            </Line>
          </TraySlot>
          <Clock>13:41<br />27-01-2023</Clock>
          <Notices>2</Notices>
        </Tray>
      </Taskbar>
    </Desktop>
  );
}
